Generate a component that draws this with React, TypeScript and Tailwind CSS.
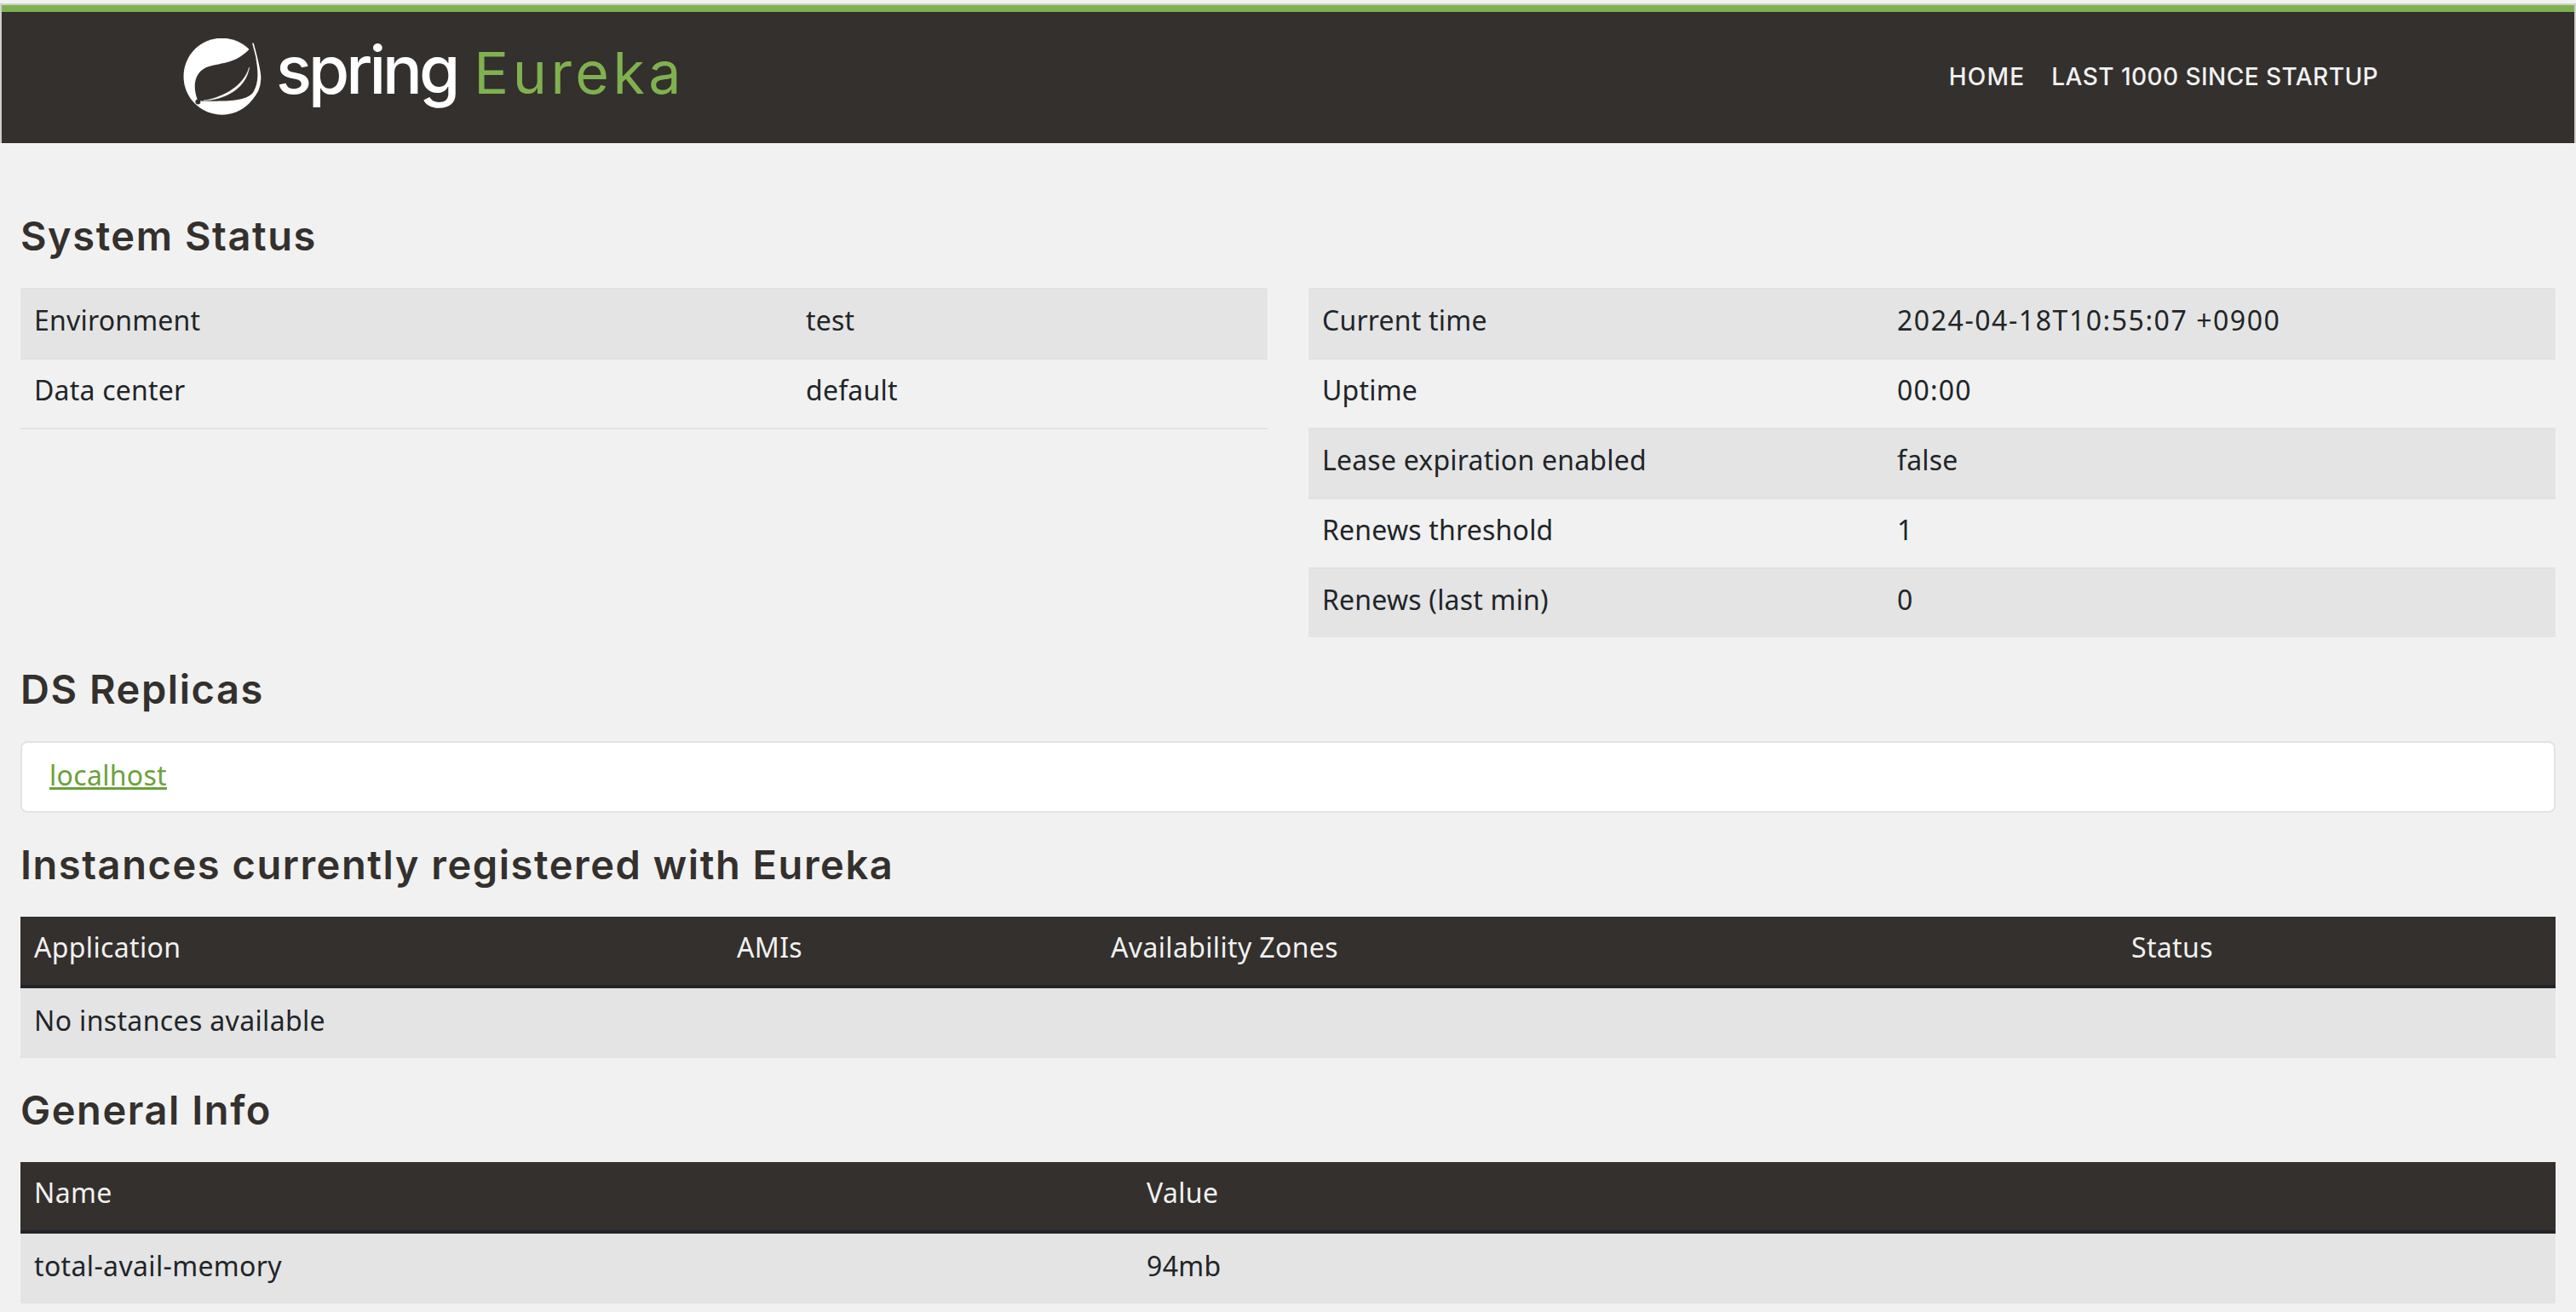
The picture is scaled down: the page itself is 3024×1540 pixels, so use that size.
import React from "react";

const body = "font-['Noto_Sans','Liberation_Sans',sans-serif]";
const head = "font-['Inter','Liberation_Sans',sans-serif]";

function Leaf() {
  return (
    <svg viewBox="78 75 280 272" className="w-[93px] h-[90px] shrink-0">
      <circle cx="215" cy="210" r="136" fill="#fff" />
      <path d="M130 296C112 255 112 200 160 178C205 160 270 170 323 100C345 170 350 230 325 268C300 300 230 298 150 298Z" fill="#34302d" />
      <path d="M325 92C338 140 352 190 351 218C350 250 338 275 318 292" fill="none" stroke="#fff" strokeWidth="5" />
      <path d="M312 178C292 245 220 285 150 296C225 292 300 255 312 178Z" fill="#fff" stroke="#fff" strokeWidth="1.5" />
      <circle cx="130" cy="300" r="9" fill="#34302d" />
    </svg>
  );
}

function Cell({ children, className = "" }: { children: React.ReactNode; className?: string }) {
  return <td className={`px-4 pt-[12px] pb-[20px] border-t-2 border-[#dee2e6] align-top ${className}`}>{children}</td>;
}

const VALUE_TRACKING: Record<string, string> = {
  "2024-04-18T10:55:07 +0900": "tracking-[1.55px]",
  "00:00": "tracking-[1.2px]",
};

function KV({ rows, w1, w2, className = "" }: { rows: [string, string][]; w1: string; w2: string; className?: string }) {
  return (
    <table className={`table-fixed w-full border-collapse text-[32px] leading-[48px] text-[#212529] tracking-[0.2px] ${body} ${className}`}>
      <colgroup>
        <col className={w1} />
        <col className={w2} />
      </colgroup>
      <tbody>
        {rows.map(([a, b], i) => (
          <tr key={a} className={i % 2 === 0 ? "bg-[#e4e4e4]" : ""}>
            <Cell>{a}</Cell>
            <Cell className={VALUE_TRACKING[b] ?? ""}>{b}</Cell>
          </tr>
        ))}
      </tbody>
    </table>
  );
}

function H2({ children }: { children: React.ReactNode }) {
  return <h2 className={`text-[47px] leading-[58px] mb-8 font-semibold tracking-[1.55px] text-[#34302d] ${head}`}>{children}</h2>;
}

function Th({ children }: { children: React.ReactNode }) {
  return <th className="px-4 pt-[12px] pb-[20px] text-left font-normal border-b-4 border-[#212529]">{children}</th>;
}

export default function App() {
  return (
    <div className="min-h-screen bg-[#f1f1f1] pt-1">
      <header className="h-[164px] bg-[#34302d] border-t-[2px] border-[#cfcfcf] border-l-[2px] border-r-[2px] flex items-start justify-between relative">
        <div className="absolute left-0 right-0 top-0 h-2 bg-[#7fb24f]" />
        <div className="flex items-start pl-[213px] pt-[39px]">
          <Leaf />
          <div className={`flex items-baseline ml-[16px] -mt-[8px] ${head}`}>
            <span className="text-[78px] leading-[90px] font-medium text-white tracking-[-4px]">spring</span>
            <span className="text-[68px] leading-[90px] text-[#7fb24f] ml-[20px] tracking-[4.5px]">Eureka</span>
          </div>
        </div>
        <nav className={`flex gap-[31px] pt-[63px] pr-[230px] text-[28px] leading-[42px] font-medium tracking-[0.45px] text-[#f1f1f1] ${head}`}>
          <span className="tracking-[1.2px]">HOME</span>
          <span>LAST 1000 SINCE STARTUP</span>
        </nav>
      </header>

      <main className="px-6 pt-20">
        <H2>System Status</H2>
        <div className="flex gap-12 items-start mb-8">
          <div className="w-[1464px]">
            <KV w1="w-[906px]" w2="w-[558px]" className="border-b-2 border-[#dee2e6]" rows={[["Environment", "test"], ["Data center", "default"]]} />
          </div>
          <div className="w-[1464px]">
            <KV
              w1="w-[675px]"
              w2="w-[789px]"
              rows={[
                ["Current time", "2024-04-18T10:55:07 +0900"],
                ["Uptime", "00:00"],
                ["Lease expiration enabled", "false"],
                ["Renews threshold", "1"],
                ["Renews (last min)", "0"],
              ]}
            />
          </div>
        </div>

        <H2>DS Replicas</H2>
        <div className={`h-[84px] bg-white border-2 border-[#e3e3e3] rounded-lg px-8 pb-[4px] mb-8 flex items-center text-[32px] tracking-[0.3px] ${body}`}>
          <a href="#" className="text-[#6ba13b] underline">localhost</a>
        </div>

        <H2>Instances currently registered with Eureka</H2>
        <table className={`table-fixed w-full border-collapse mb-8 text-[32px] leading-[48px] tracking-[0.35px] ${body}`}>
          <colgroup>
            <col className="w-[825px]" />
            <col className="w-[439px]" />
            <col className="w-[1198px]" />
            <col className="w-[514px]" />
          </colgroup>
          <thead className="bg-[#34302d] text-[#f1f1f1]">
            <tr>
              <Th>Application</Th>
              <Th>AMIs</Th>
              <Th>Availability Zones</Th>
              <Th>Status</Th>
            </tr>
          </thead>
          <tbody className="text-[#212529]">
            <tr className="bg-[#e4e4e4]">
              <Cell className="border-t-0 pt-[14px]">No instances available</Cell>
              <Cell className="border-t-0"> </Cell>
              <Cell className="border-t-0"> </Cell>
              <Cell className="border-t-0"> </Cell>
            </tr>
          </tbody>
        </table>

        <H2>General Info</H2>
        <table className={`table-fixed w-full border-collapse text-[32px] leading-[48px] tracking-[0.35px] ${body}`}>
          <colgroup>
            <col className="w-[1306px]" />
            <col className="w-[1670px]" />
          </colgroup>
          <thead className="bg-[#34302d] text-[#f1f1f1]">
            <tr>
              <Th>Name</Th>
              <Th>Value</Th>
            </tr>
          </thead>
          <tbody className="text-[#212529]">
            <tr className="bg-[#e4e4e4]">
              <Cell className="border-t-0 pt-[14px]">total-avail-memory</Cell>
              <Cell className="border-t-0 pt-[14px]">94mb</Cell>
            </tr>
          </tbody>
        </table>
      </main>
    </div>
  );
}
